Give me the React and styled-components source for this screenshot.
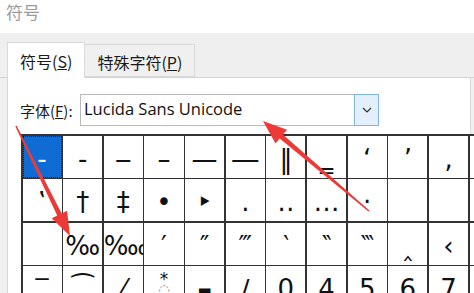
import React from 'react'
import styled, { createGlobalStyle } from 'styled-components'

const GlobalStyle = createGlobalStyle`
  html, body {
    margin: 0;
    padding: 0;
    background: #ffffff;
    overflow: hidden;
  }
`

const cjk = `"Noto Sans CJK SC", "Noto Sans", sans-serif`

const Window = styled.div`
  position: relative;
  width: 474px;
  height: 293px;
  overflow: hidden;
  background: #f0f0f0;
  font-family: ${cjk};
`

const TitleBar = styled.div`
  height: 33px;
  background: #ffffff;
  padding-left: 6px;
  color: #9b9b9b;
  font-size: 17px;
  line-height: 24px;
`

const TabStrip = styled.div`
  height: 45px;
  box-sizing: border-box;
  display: flex;
  align-items: flex-end;
  padding-left: 7px;
  background: #efefef;
  border-bottom: 1px solid #d3d3d3;
`

const Tab = styled.div`
  box-sizing: border-box;
  height: ${p => (p.$active ? '36px' : '33px')};
  margin-bottom: ${p => (p.$active ? '-1px' : '0')};
  padding: 0 12px;
  display: flex;
  align-items: center;
  background: ${p => (p.$active ? '#ffffff' : '#f0f0f0')};
  border: 1px solid #d9d9d9;
  border-bottom: ${p => (p.$active ? 'none' : '1px solid #d9d9d9')};
  margin-right: -1px;
  color: #1a1a1a;
  font-size: 16px;
  padding-top: ${p => (p.$active ? '0' : '2px')};
`

const Panel = styled.div`
  margin-left: 7px;
  height: 215px;
  background: #ffffff;
  border-left: 1px solid #d9d9d9;
  border-right: 1px solid #d9d9d9;
  margin-right: 3px;
`

const FontRow = styled.div`
  display: flex;
  align-items: center;
  gap: 3px;
  padding: 16px 0 0 12px;
  height: 32px;
`

const Label = styled.span`
  font-size: 15px;
  color: #1a1a1a;
  width: 57px;
`

const Select = styled.div`
  box-sizing: border-box;
  width: 299px;
  height: 32px;
  display: flex;
  border: 1px solid #b9b9b9;
  background: #ffffff;
`

const SelectText = styled.div`
  flex: 1;
  padding-left: 3px;
  font-family: "Open Sans", "Noto Sans", sans-serif;
  font-size: 16.5px;
  line-height: 28px;
  color: #111;
`

const DropButton = styled.div`
  box-sizing: border-box;
  width: 25px;
  margin: -1px -1px -1px 0;
  background: #e3f0fb;
  border: 1px solid #7fb5e6;
  display: flex;
  align-items: center;
  justify-content: center;
`

const Grid = styled.div`
  margin: 8px 0 0 13px;
  display: grid;
  grid-template-columns: repeat(12, 39.1px);
  grid-auto-rows: 42.1px;
  gap: 1.55px;
  padding: 1.5px;
  background: #333333;
  width: max-content;
`

const Cell = styled.div`
  box-sizing: border-box;
  overflow: hidden;
  white-space: nowrap;
  text-align: center;
  padding-top: 4px;
  font-family: "DejaVu Sans", sans-serif;
  font-size: 26px;
  line-height: 38px;
  color: ${p => (p.$selected ? '#ffffff' : '#111111')};
  background: ${p => (p.$selected ? '#0f6cd4' : '#ffffff')};
  outline: ${p => (p.$selected ? '1px dotted #1b1b1b' : 'none')};
  outline-offset: -1px;
`

const Stack = styled.span`
  display: inline-flex;
  flex-direction: column;
  align-items: center;
  vertical-align: top;
  line-height: 1;
  padding-top: 1px;
  color: #777;
`

const Star = styled.span`
  font-size: 17px;
  color: #111;
`

const Ring = styled.span`
  font-size: 13px;
  margin-top: -5px;
`

const SmallSquare = styled.span`
  font-size: 15px;
`

const Overlay = styled.svg`
  position: absolute;
  left: 0;
  top: 0;
  pointer-events: none;
`

const rows = [
  ['‐', '‑', '‒', '–', '—', '―', '‖', '‗', '‘', '’', '‚', ''],
  ['‛', '†', '‡', '•', '‣', '․', '‥', '…', '‧', '', '', ''],
  ['', '‰', '‱', '′', '″', '‴', '‵', '‶', '‷', '‸', '‹', ''],
  ['‾', '⁀', '⁄', 'star', 'square', '∕', '0', '4', '5', '6', '7', '']
]

function arrowPoints (x1, y1, x2, y2, tail, shaft, headLen, headW) {
  const dx = x2 - x1
  const dy = y2 - y1
  const len = Math.hypot(dx, dy)
  const ux = dx / len
  const uy = dy / len
  const nx = -uy
  const ny = ux
  const bx = x2 - ux * headLen
  const by = y2 - uy * headLen
  const pt = (x, y) => `${x.toFixed(1)},${y.toFixed(1)}`
  return [
    pt(x1 + nx * tail / 2, y1 + ny * tail / 2),
    pt(bx + nx * shaft / 2, by + ny * shaft / 2),
    pt(bx + nx * headW / 2, by + ny * headW / 2),
    pt(x2, y2),
    pt(bx - nx * headW / 2, by - ny * headW / 2),
    pt(bx - nx * shaft / 2, by - ny * shaft / 2),
    pt(x1 - nx * tail / 2, y1 - ny * tail / 2)
  ].join(' ')
}

function Chevron () {
  return (
    <svg width='10' height='6' viewBox='0 0 10 6'>
      <path d='M1 1 L5 5 L9 1' fill='none' stroke='#333' strokeWidth='1.2' />
    </svg>
  )
}

function Glyph ({ ch }) {
  if (ch === 'star') {
    return (
      <Stack>
        <Star>*</Star>
        <Ring>◌</Ring>
      </Stack>
    )
  }
  if (ch === 'square') return <SmallSquare>■</SmallSquare>
  return ch
}

export default function App () {
  return (
    <>
      <GlobalStyle />
      <Window>
        <TitleBar>符号</TitleBar>
        <TabStrip>
          <Tab $active>符号(<u>S</u>)</Tab>
          <Tab>特殊字符(<u>P</u>)</Tab>
        </TabStrip>
        <Panel>
          <FontRow>
            <Label>字体(<u>F</u>):</Label>
            <Select>
              <SelectText>Lucida Sans Unicode</SelectText>
              <DropButton><Chevron /></DropButton>
            </Select>
          </FontRow>
          <Grid>
            {rows.map((row, r) =>
              row.map((ch, c) => (
                <Cell key={`${r}-${c}`} $selected={r === 0 && c === 0}>
                  <Glyph ch={ch} />
                </Cell>
              ))
            )}
          </Grid>
        </Panel>
        <Overlay width='474' height='293' viewBox='0 0 474 293'>
          <polygon points={arrowPoints(16, 126, 70, 236, 1.5, 5, 24, 17)} fill='#ec3b36' />
          <polygon points={arrowPoints(369, 211, 263, 121, 1.5, 5, 24, 18)} fill='#ec3b36' />
        </Overlay>
      </Window>
    </>
  )
}
